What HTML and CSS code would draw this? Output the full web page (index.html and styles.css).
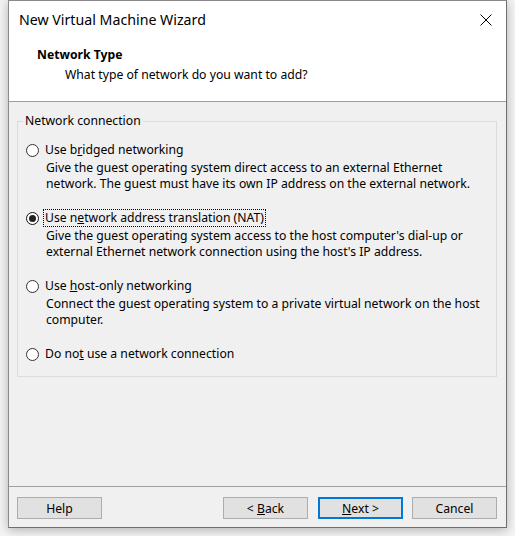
FILE: index.html
```html
<!DOCTYPE html>
<html>
<head>
<meta charset="utf-8">
<link rel="stylesheet" href="styles.css">
</head>
<body>
<div class="window">
  <div class="top">
    <div class="titlebar">
      <span class="title">New Virtual Machine Wizard</span>
      <svg class="close" width="12" height="12" viewBox="0 0 12 12"><path d="M0.5 0.5 L11.5 11.5 M11.5 0.5 L0.5 11.5" stroke="#000" stroke-width="1" fill="none"/></svg>
    </div>
    <div class="header">
      <div class="h-title">Network Type</div>
      <div class="h-sub">What type of network do you want to add?</div>
    </div>
  </div>
  <div class="content">
    <fieldset class="group">
      <legend class="legend">Network connection</legend>
      <div class="options">
        <div class="option">
          <div class="row"><span class="radio"></span><span class="label">Use b<u>r</u>idged networking</span></div>
          <div class="desc">Give the guest operating system direct access to an external Ethernet<br>network. The guest must have its own IP address on the external network.</div>
        </div>
        <div class="option">
          <div class="row"><span class="radio checked"></span><span class="label focus">Use n<u>e</u>twork address translation (NAT)</span></div>
          <div class="desc">Give the guest operating system access to the host computer's dial-up or<br>external Ethernet network connection using the host's IP address.</div>
        </div>
        <div class="option">
          <div class="row"><span class="radio"></span><span class="label">Use <u>h</u>ost-only networking</span></div>
          <div class="desc">Connect the guest operating system to a private virtual network on the host<br>computer.</div>
        </div>
        <div class="option last">
          <div class="row"><span class="radio"></span><span class="label">Do no<u>t</u> use a network connection</span></div>
        </div>
      </div>
    </fieldset>
  </div>
  <div class="footer">
    <button class="btn">Help</button>
    <div class="spacer"></div>
    <button class="btn back">&lt; <u>B</u>ack</button>
    <button class="btn primary"><u>N</u>ext &gt;</button>
    <button class="btn">Cancel</button>
  </div>
</div>
</body>
</html>
```
FILE: styles.css
```css
html, body {
  margin: 0;
  padding: 0;
}
body {
  background: #f4f4f4;
  width: 515px;
  height: 536px;
  overflow: hidden;
  font-family: "Noto Sans", "Open Sans", sans-serif;
  font-size: 12.2px;
  color: #000;
}
.window {
  margin-left: 8px;
  width: 499px;
  height: 528px;
  box-sizing: border-box;
  border: 1px solid #8a8a8a;
  border-right-color: #6f6f6f;
  border-bottom-color: #6f6f6f;
  background: #f0f0f0;
  display: flex;
  flex-direction: column;
  box-shadow: 0 2px 10px rgba(0,0,0,0.28);
}
.top {
  background: #fff;
  height: 100px;
  border-bottom: 1px solid #a0a0a0;
}
.titlebar {
  height: 38px;
  display: flex;
  align-items: center;
  padding-left: 10px;
  padding-right: 14px;
}
.title {
  font-size: 14.2px;
  flex: 1;
  line-height: 20px;
}
.close {
  display: block;
}
.header {
  padding-top: 8px;
}
.h-title {
  font-weight: bold;
  line-height: 16px;
  padding-left: 28px;
}
.h-sub {
  line-height: 16px;
  margin-top: 4px;
  padding-left: 56px;
}
.content {
  flex: 1;
  padding-top: 11px;
}
.group {
  margin: 0 9px 0 8px;
  padding: 0;
  border: 1px solid #dcdcdc;
  min-width: 0;
}
.legend {
  margin-left: 5px;
  padding: 0 2px;
  line-height: 16px;
}
.options {
  padding: 12px 0 13px 8px;
}
.option {
  margin-bottom: 17px;
}
.option.last {
  margin-bottom: 0;
}
.row {
  display: flex;
  align-items: center;
  height: 18px;
}
.radio {
  width: 11px;
  height: 11px;
  border: 1px solid #333;
  border-radius: 50%;
  background: #fff;
  position: relative;
  flex: none;
}
.radio.checked {
  border-color: #111;
}
.radio.checked::after {
  content: "";
  position: absolute;
  left: 2px;
  top: 2px;
  width: 7px;
  height: 7px;
  border-radius: 50%;
  background: #222;
}
.label {
  margin-left: 4px;
  padding: 0 1px;
  line-height: 16px;
  border: 1px dotted transparent;
}
.label.focus {
  border-color: #000;
}
.desc {
  margin-top: 1px;
  margin-left: 20px;
  line-height: 16px;
}
.footer {
  border-top: 1px solid #a0a0a0;
  height: 41px;
  box-sizing: border-box;
  padding: 10px 9px 9px 8px;
  display: flex;
  gap: 9px;
}
.spacer {
  flex: 1;
}
.btn {
  width: 85px;
  height: 22px;
  box-sizing: border-box;
  border: 1px solid #adadad;
  background: #e1e1e1;
  font-family: "Noto Sans", "Open Sans", sans-serif;
  font-size: 12.2px;
  color: #000;
  padding: 0;
  margin: 0;
}
.btn.back {
  margin-right: 1px;
}
.btn.primary {
  border: 2px solid #0078d7;
}
```
